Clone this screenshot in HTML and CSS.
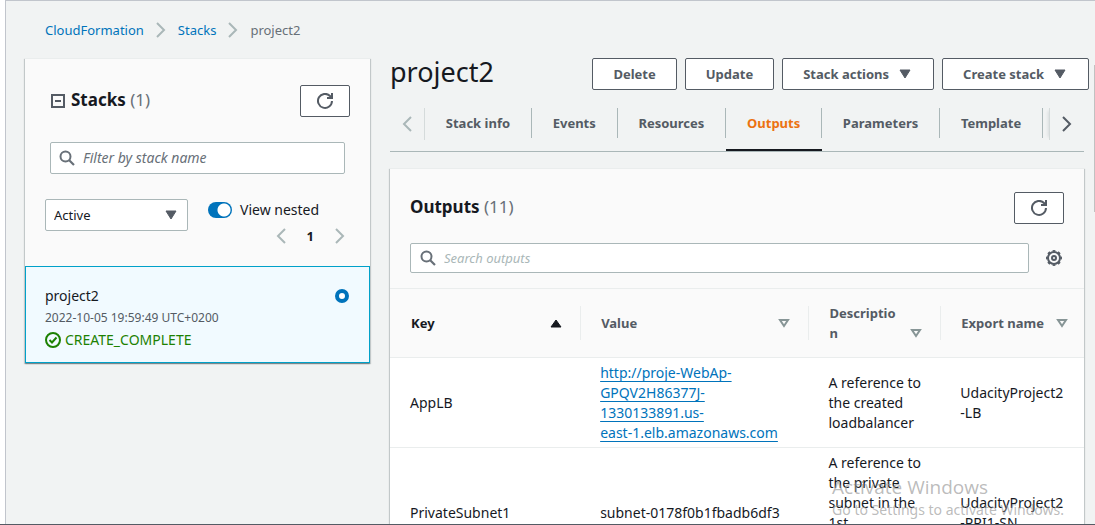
FILE: index.html
```html
<!DOCTYPE html>
<html lang="en">
<head>
<meta charset="utf-8">
<title>CloudFormation - Stack project2</title>
<link rel="stylesheet" href="styles.css">
</head>
<body>
<svg class="sprite" aria-hidden="true">
  <symbol id="chevron-right" viewBox="0 0 16 16"><path d="M4 1l7 7-7 7" fill="none" stroke="currentColor" stroke-width="2"/></symbol>
  <symbol id="chevron-left" viewBox="0 0 16 16"><path d="M12 1L5 8l7 7" fill="none" stroke="currentColor" stroke-width="2"/></symbol>
  <symbol id="refresh" viewBox="0 0 16 16"><path d="M15 8a7 7 0 1 1-2-5l2 2M10 5h5V0" fill="none" stroke="currentColor" stroke-width="2"/></symbol>
  <symbol id="search" viewBox="0 0 16 16"><circle cx="6.500" cy="6.500" r="5" fill="none" stroke="currentColor" stroke-width="2"/><path d="M10 10l5 5" stroke="currentColor" stroke-width="2.200"/></symbol>
  <symbol id="caret-down" viewBox="0 0 16 16"><path d="M3 4h10L8 12z" fill="currentColor" stroke="currentColor" stroke-linejoin="round"/></symbol>
  <symbol id="caret-up" viewBox="0 0 16 16"><path d="M3 12h10L8 5z" fill="currentColor" stroke="currentColor" stroke-linejoin="round"/></symbol>
  <symbol id="sort" viewBox="0 0 16 16"><path d="M4 5h8l-4 6z" fill="none" stroke="#879596" stroke-width="2"/></symbol>
  <symbol id="gear" viewBox="0 0 16 16"><g fill="none" stroke="currentColor"><circle cx="8" cy="8" r="6" stroke-width="2"/><circle cx="8" cy="8" r="7.200" stroke-width="1.600" pathLength="80" stroke-dasharray="5 5" stroke-dashoffset="2.500"/><circle cx="8" cy="8" r="2" stroke-width="2"/></g></symbol>
  <symbol id="check" viewBox="0 0 16 16"><circle cx="8" cy="8" r="7" fill="none" stroke="currentColor" stroke-width="2"/><path d="M4.500 8L7 10.500 11.500 5.500" fill="none" stroke="currentColor" stroke-width="2"/></symbol>
  <symbol id="collapse" viewBox="0 0 14 14"><path d="M1 1h12v12H1zM4 7h6" fill="none" stroke="currentColor" stroke-width="2"/></symbol>
</svg>
<div class="frame">
  <div class="console">
    <nav class="breadcrumb" aria-label="Breadcrumb">
      <a href="#cf">CloudFormation</a>
      <svg class="icon"><use href="#chevron-right"/></svg>
      <a href="#stacks">Stacks</a>
      <svg class="icon"><use href="#chevron-right"/></svg>
      <span>project2</span>
    </nav>
    <div class="columns">
      <aside class="panel stacks">
        <div class="stacks-head">
          <button class="plain collapse" aria-label="Collapse stacks"><svg><use href="#collapse"/></svg></button>
          <h2>Stacks <span class="count">(1)</span></h2>
          <button class="btn refresh" aria-label="Refresh stacks"><svg class="icon"><use href="#refresh"/></svg></button>
        </div>
        <label class="search stack-search">
          <svg class="icon"><use href="#search"/></svg>
          <input type="text" aria-label="Filter by stack name" placeholder="Filter by stack name">
        </label>
        <div class="filters">
          <div class="select">
            <select aria-label="Stack status"><option>Active</option><option>Deleted</option></select>
            <svg class="icon"><use href="#caret-down"/></svg>
          </div>
          <div class="filter-side">
            <label class="toggle"><input type="checkbox" checked>View nested</label>
            <div class="pager">
              <button class="plain" aria-label="Previous page"><svg class="icon"><use href="#chevron-left"/></svg></button>
              <b>1</b>
              <button class="plain" aria-label="Next page"><svg class="icon"><use href="#chevron-right"/></svg></button>
            </div>
          </div>
        </div>
        <label class="stack">
          <span class="stack-name">project2</span>
          <input type="radio" name="stack" checked>
          <span class="stack-time">2022-10-05 19:59:49 UTC+0200</span>
          <span class="stack-status"><svg class="icon"><use href="#check"/></svg>CREATE_COMPLETE</span>
        </label>
      </aside>
      <main class="detail">
        <header class="detail-head">
          <h1>project2</h1>
          <button class="btn">Delete</button>
          <button class="btn">Update</button>
          <button class="btn menu">Stack actions<svg class="icon"><use href="#caret-down"/></svg></button>
          <button class="btn menu">Create stack<svg class="icon"><use href="#caret-down"/></svg></button>
        </header>
        <nav class="tabs" aria-label="Stack sections">
          <button class="plain scroll scroll-left" aria-label="Scroll left"><svg class="icon"><use href="#chevron-left"/></svg></button>
          <div class="tab-list">
            <a href="#info">Stack info</a>
            <a href="#events">Events</a>
            <a href="#resources">Resources</a>
            <a href="#outputs" class="active" aria-current="page">Outputs</a>
            <a href="#parameters">Parameters</a>
            <a href="#template">Template</a>
          </div>
          <button class="plain scroll scroll-right" aria-label="Scroll right"><svg class="icon"><use href="#chevron-right"/></svg></button>
        </nav>
        <section class="panel outputs">
          <div class="outputs-head">
            <h2>Outputs <span class="count">(11)</span></h2>
            <button class="btn refresh" aria-label="Refresh outputs"><svg class="icon"><use href="#refresh"/></svg></button>
          </div>
          <div class="outputs-tools">
            <label class="search">
              <svg class="icon"><use href="#search"/></svg>
              <input type="text" aria-label="Search outputs" placeholder="Search outputs">
            </label>
            <button class="plain gear" aria-label="Preferences"><svg class="icon"><use href="#gear"/></svg></button>
          </div>
          <table>
            <colgroup><col class="col-key"><col class="col-value"><col class="col-desc"><col class="col-export"></colgroup>
            <thead>
              <tr>
                <th scope="col" class="sorted"><button class="plain sort"><span>Key</span><svg class="icon"><use href="#caret-up"/></svg></button></th>
                <th scope="col"><button class="plain sort"><span>Value</span><svg class="icon"><use href="#sort"/></svg></button></th>
                <th scope="col"><button class="plain sort"><span>Description</span><svg class="icon"><use href="#sort"/></svg></button></th>
                <th scope="col"><button class="plain sort"><span>Export name</span><svg class="icon"><use href="#sort"/></svg></button></th>
              </tr>
            </thead>
            <tbody>
              <tr>
                <td>AppLB</td>
                <td><a href="#lb">http://proje-WebAp-<wbr>GPQV2H86377J-<wbr>1330133891.us-<wbr><span class="unbroken">east-1.elb.amazonaws.com</span></a></td>
                <td>A reference to the created loadbalancer</td>
                <td>UdacityProject2<wbr><span class="unbroken">-LB</span></td>
              </tr>
              <tr>
                <td>PrivateSubnet1</td>
                <td>subnet-0178f0b1fbadb6df3</td>
                <td>A reference to the private subnet in the 1st<br>Availability<br>Zone</td>
                <td>UdacityProject2<wbr><span class="unbroken">-PRI1-SN</span></td>
              </tr>
            </tbody>
          </table>
        </section>
      </main>
    </div>
  </div>
  <div class="scrollbar"></div>
  <div class="watermark"><p class="watermark-title">Activate Windows</p><p>Go to Settings to activate Windows.</p></div>
</div>
</body>
</html>
```
FILE: styles.css
```css
* { box-sizing: border-box; }
body {
  margin: 0;
  font: 14px/20px "Noto Sans", sans-serif;
  color: #16191f;
  background: #fff;
}
h1, h2, p { margin: 0; }
a { color: #0073bb; text-decoration: none; }
button, input, select { font: inherit; color: inherit; }
.sprite { display: none; }
.icon { width: 16px; height: 16px; flex: none; display: block; }
.plain { border: 0; padding: 0; background: none; color: inherit; }

.frame {
  position: relative;
  height: 100vh;
  overflow: hidden;
  padding-left: 5px;
  border-bottom: 1px solid #545b64;
}
.console {
  min-height: 100%;
  padding: 19px 6px 0 19px;
  background: #f1f3f3;
  border-top: 1px solid #c1c5cc;
  border-left: 1px solid #c1c5cc;
}
.breadcrumb {
  display: flex;
  align-items: center;
  gap: 9px;
  padding-left: 20px;
  color: #687078;
  font-size: 13px;
}
.breadcrumb .icon { color: #aab7b8; }
.columns { display: flex; align-items: flex-start; gap: 20px; padding-top: 18px; }

.panel {
  background: #fafafa;
  border-top: 1px solid #eaeded;
  box-shadow: 0 1px 1px rgba(0, 28, 36, .3), 1px 1px 1px rgba(0, 28, 36, .15), -1px 1px 1px rgba(0, 28, 36, .15);
}
h2 { flex: 1; padding-bottom: 2px; font-size: 17px; line-height: 24px; font-weight: 700; }
.count { color: #687078; font-weight: 400; }
.btn {
  display: flex;
  align-items: center;
  justify-content: center;
  height: 32px;
  padding: 0 20px;
  border: 1px solid #545b64;
  border-radius: 2px;
  background: #fff;
  color: #545b64;
  font-size: 13px;
  font-weight: 700;
}
.refresh { width: 50px; padding: 0; }
.search {
  display: flex;
  align-items: center;
  gap: 8px;
  height: 30px;
  padding: 0 9px;
  border: 1px solid #aab7b8;
  border-radius: 2px;
  background: #fff;
  color: #687078;
  flex: 1;
}
.search input { flex: 1; min-width: 0; border: 0; padding: 0; background: none; outline: 0; }
.search input::placeholder { color: #aab7b8; font-size: 13px; font-style: italic; opacity: 1; }

.stacks { width: 345px; flex: none; }
.stacks-head { display: flex; align-items: center; gap: 6px; padding: 26px 20px 0 26px; }
.collapse { color: #545b64; }
.collapse svg { display: block; width: 14px; height: 14px; }
.stack-search { height: 32px; margin: 25px 25px 0; padding: 0 8px; }
.stack-search input::placeholder { color: #687078; font-size: 14px; }
.filters { display: flex; gap: 20px; padding: 25px 25px 20px 20px; }
.select { display: grid; align-items: center; width: 143px; height: 32px; }
.select > * { grid-area: 1 / 1; }
.select select {
  appearance: none;
  width: 100%;
  height: 32px;
  padding: 0 8px;
  border: 1px solid #aab7b8;
  border-radius: 2px;
  background: #fff;
  font-size: 13px;
}
.select .icon { justify-self: end; margin-right: 9px; color: #545b64; pointer-events: none; }
.filter-side { flex: 1; padding-top: 1px; }
.toggle { display: flex; align-items: center; gap: 8px; }
.toggle input {
  appearance: none;
  width: 24px;
  height: 16px;
  margin: 0;
  border-radius: 8px;
  background: radial-gradient(circle at 16px 8px, #fff 6px, #0073bb 7px);
}
.pager { display: flex; align-items: center; justify-content: flex-end; gap: 18px; padding-top: 6px; margin-right: -3px; font-size: 13px; }
.pager .plain { color: #aab7b8; }
.stack {
  display: grid;
  grid-template-columns: 1fr auto;
  align-items: center;
  row-gap: 2px;
  padding: 19px 20px 12px 19px;
  background: #f1faff;
  border: 1px solid #00a1c9;
}
.stack input {
  appearance: none;
  width: 14px;
  height: 14px;
  margin: 0;
  border: 4px solid #0073bb;
  border-radius: 50%;
  background: #fff;
}
.stack-time { grid-column: 1 / -1; font-size: 12px; color: #545b64; }
.stack-status { grid-column: 1 / -1; display: flex; align-items: center; gap: 4px; color: #1d8102; }

.detail { flex: 1; min-width: 0; }
.detail-head { display: flex; align-items: center; gap: 8px; }
h1 { flex: 1; padding-bottom: 4px; font-size: 27px; line-height: 28px; font-weight: 400; }
.menu { gap: 8px; }
.tabs {
  display: flex;
  align-items: center;
  height: 62px;
  margin-right: 5px;
  padding-top: 6px;
  border-bottom: 1px solid #aab7b8;
}
.scroll { display: flex; align-items: center; justify-content: center; width: 35px; height: 32px; color: #545b64; }
.scroll-left { border-right: 1px solid #d5dbdb; color: #aab7b8; }
.scroll-right { border-left: 1px solid #d5dbdb; box-shadow: -4px 0 3px -3px rgba(0, 28, 36, .1); }
.tab-list { display: flex; flex: 1; align-self: stretch; padding-right: 6px; }
.tab-list a {
  display: flex;
  flex: 1 1 auto;
  align-items: center;
  justify-content: center;
  border-bottom: 2px solid transparent;
  color: #545b64;
  font-size: 13px;
  font-weight: 700;
}
.tab-list a::after { content: ""; width: 1px; height: 30px; margin-left: auto; background: #aab7b8; }
.tab-list a::before { content: ""; margin-right: auto; }
.tab-list .active { border-bottom-color: #16191f; color: #ec7211; }

.outputs { margin: 16px 5px 0 0; }
.outputs-head { display: flex; align-items: center; padding: 23px 20px 0; }
.outputs-tools { display: flex; align-items: center; gap: 17px; padding: 19px 22px 15px 20px; }
.gear { color: #545b64; }
table { width: 100%; table-layout: fixed; border-collapse: collapse; background: #fff; }
.col-key { width: 27.400%; }
.col-value { width: 32.900%; }
.col-desc { width: 19%; }
.col-export { width: 20.700%; }
thead { background: #fafafa; border-top: 1px solid #eaeded; }
th { height: 69px; padding: 0; color: #545b64; text-align: left; }
th + th { background: linear-gradient(#eaeded, #eaeded) left center / 1px 34px no-repeat; }
.sort {
  display: flex;
  align-items: flex-end;
  justify-content: space-between;
  gap: 10px;
  width: 100%;
  padding: 0 16px 0 21px;
  font-size: 13px;
  font-weight: 700;
  text-align: left;
  overflow-wrap: anywhere;
}
th:last-child .sort { padding-right: 14px; }
.sort .icon { margin-bottom: 2px; }
.sorted { color: #16191f; }
td { padding: 5px 12px 4px 20px; border-top: 1px solid #eaeded; vertical-align: middle; }
td a { text-decoration: underline; text-underline-offset: 3px; }
.unbroken { white-space: nowrap; }

.scrollbar { position: absolute; right: 0; top: 65px; width: 1px; height: 147px; background: #c1c1c1; }
.watermark { position: absolute; right: 31px; bottom: 4px; color: rgba(150, 150, 150, .65); font-size: 14px; pointer-events: none; }
.watermark-title { font-family: "Open Sans", sans-serif; font-size: 19px; line-height: 26px; }
```
